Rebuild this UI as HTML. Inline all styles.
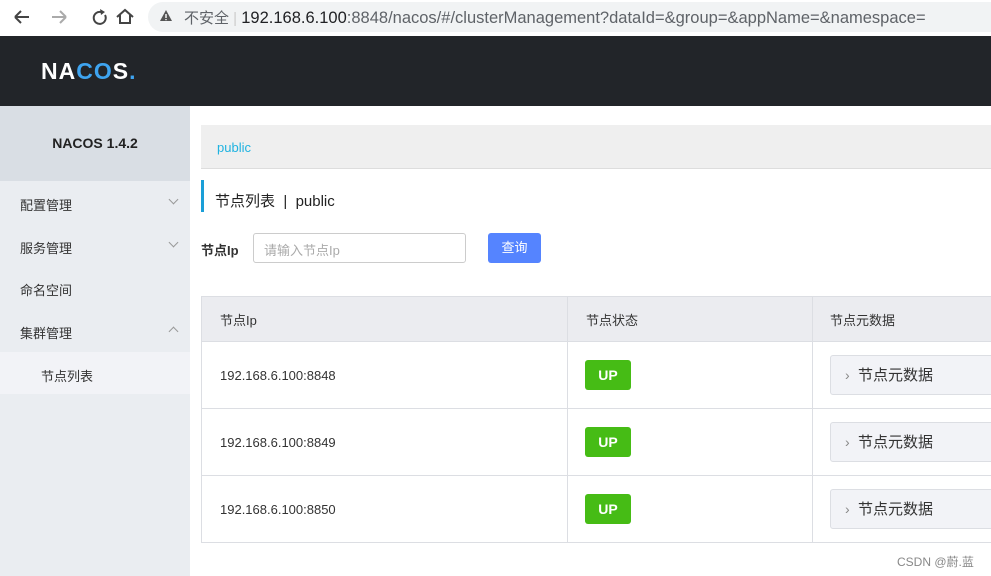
<!DOCTYPE html>
<html><head><meta charset="utf-8"><style>
*{margin:0;padding:0;box-sizing:border-box}
body{width:991px;height:576px;overflow:hidden;background:#fff;font-family:"Liberation Sans","Noto Sans CJK SC",sans-serif;position:relative}
.a{position:absolute}
.nav{font-size:13px;color:#333}
.chev{position:absolute;left:170px;width:7px;height:7px;border-right:1px solid #999;border-bottom:1px solid #999}
td,th{border:1px solid #dcdee3}
.md{height:40px;border:1px solid #dcdee3;border-radius:3px;background:#f2f3f7;font-size:15px;line-height:38px;padding-left:14px;color:#333}
.md span{color:#888;font-size:14px}
</style></head><body>
<div class="a" style="left:0;top:0;width:991px;height:36px;background:#fff"></div>
<svg class="a" style="left:10px;top:6px" width="130" height="22" viewBox="0 0 130 22">
<path d="M5 11h14M5 11l6-6M5 11l6 6" stroke="#444" stroke-width="2" fill="none"/>
<path d="M42 11h14M56 11l-6-6M56 11l-6 6" stroke="#aaa" stroke-width="2" fill="none"/>
<path d="M91 6a6 6 0 1 0 4 3" stroke="#444" stroke-width="2" fill="none"/><path d="M90 3l5 3-4 3z" fill="#444"/>
<path d="M107 11l8-7 8 7M110 9v8h10v-8" stroke="#444" stroke-width="2" fill="none"/>
</svg>
<div class="a" style="left:148px;top:2px;width:843px;height:30px;border-radius:15px 0 0 15px;background:#f1f3f4"></div>
<svg class="a" style="left:159px;top:9px" width="14" height="13"><path d="M7 1L13 12H1z" fill="#555"/><rect x="6.3" y="5" width="1.4" height="4" fill="#fff"/><rect x="6.3" y="10" width="1.4" height="1.2" fill="#fff"/></svg>
<div class="a" style="left:184px;top:7px;font-size:15px;color:#5f6368;white-space:nowrap">不安全 <span style="color:#ccc">|</span> <span style="color:#202124;font-size:16.5px">192.168.6.100</span><span style="color:#5f6368;font-size:16.5px">:8848/nacos/#/clusterManagement?dataId=&amp;group=&amp;appName=&amp;namespace=</span></div>
<div class="a" style="left:0;top:36px;width:991px;height:70px;background:#222529"></div>
<div class="a" style="left:41px;top:58px;font-size:23px;font-weight:bold;color:#fff;letter-spacing:1px">NA<span style="color:#3ea4f0">CO</span>S<span style="color:#3ea4f0">.</span></div>
<div class="a" style="left:0;top:106px;width:190px;height:470px;background:#eaedf1"></div>
<div class="a" style="left:0;top:106px;width:190px;height:75px;background:#d9dee4;text-align:center;line-height:75px;font-weight:bold;font-size:14px;color:#222">NACOS 1.4.2</div>
<div class="a nav" style="left:20px;top:195px">配置管理</div><div class="chev" style="top:196px;transform:rotate(45deg)"></div>
<div class="a nav" style="left:20px;top:238px">服务管理</div><div class="chev" style="top:239px;transform:rotate(45deg)"></div>
<div class="a nav" style="left:20px;top:280px">命名空间</div>
<div class="a nav" style="left:20px;top:323px">集群管理</div><div class="chev" style="top:328px;transform:rotate(225deg)"></div>
<div class="a" style="left:0;top:352px;width:190px;height:42px;background:#f2f3f7"></div>
<div class="a nav" style="left:41px;top:366px">节点列表</div>
<div class="a" style="left:201px;top:125px;width:790px;height:44px;background:#efefef;border-bottom:1px solid #ddd"></div>
<div class="a" style="left:217px;top:140px;font-size:13px;color:#1fb3e0">public</div>
<div class="a" style="left:201px;top:180px;width:3px;height:32px;background:#1a9fd8"></div>
<div class="a" style="left:215px;top:190px;font-size:15px;color:#222">节点列表 &nbsp;|&nbsp; public</div>
<div class="a" style="left:201px;top:240px;font-size:13px;font-weight:bold;color:#333">节点Ip</div>
<div class="a" style="left:253px;top:233px;width:213px;height:30px;border:1px solid #ccc;border-radius:3px;font-size:13px;color:#aaa;padding:6px 10px">请输入节点Ip</div>
<div class="a" style="left:488px;top:233px;width:53px;height:30px;background:#5584ff;border-radius:3px;color:#fff;font-size:13px;text-align:center;line-height:30px">查询</div>
<table class="a" style="left:201px;top:296px;width:800px;border-collapse:collapse;font-size:13px;color:#333">
<tr style="height:45px;background:#ebecf0;text-align:left"><th style="width:366px;padding-left:18px;font-weight:normal">节点Ip</th><th style="width:245px;padding-left:18px;font-weight:normal">节点状态</th><th style="padding-left:17px;font-weight:normal">节点元数据</th></tr>
<tr style="height:67px"><td style="padding-left:18px">192.168.6.100:8848</td><td style="padding-left:17px"><span style="display:inline-block;width:46px;height:30px;background:#46bc15;border-radius:3px;color:#fff;font-weight:bold;text-align:center;line-height:30px;font-size:14px">UP</span></td><td style="padding-left:17px"><div class="md"><span>›</span>&nbsp;&nbsp;节点元数据</div></td></tr>
<tr style="height:67px"><td style="padding-left:18px">192.168.6.100:8849</td><td style="padding-left:17px"><span style="display:inline-block;width:46px;height:30px;background:#46bc15;border-radius:3px;color:#fff;font-weight:bold;text-align:center;line-height:30px;font-size:14px">UP</span></td><td style="padding-left:17px"><div class="md"><span>›</span>&nbsp;&nbsp;节点元数据</div></td></tr>
<tr style="height:67px"><td style="padding-left:18px">192.168.6.100:8850</td><td style="padding-left:17px"><span style="display:inline-block;width:46px;height:30px;background:#46bc15;border-radius:3px;color:#fff;font-weight:bold;text-align:center;line-height:30px;font-size:14px">UP</span></td><td style="padding-left:17px"><div class="md"><span>›</span>&nbsp;&nbsp;节点元数据</div></td></tr>
</table>
<div class="a" style="left:897px;top:553px;font-size:12px;color:#888">CSDN @蔚.蓝</div>
</body></html>
